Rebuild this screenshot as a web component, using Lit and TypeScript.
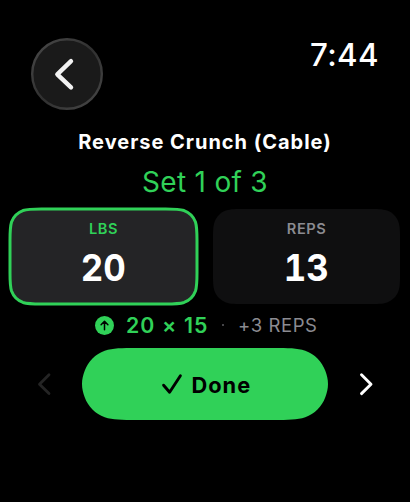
import { LitElement, html, css, svg } from "lit";
import { customElement, property } from "lit/decorators.js";

// Outline of a rectangle with continuous-curvature corners of radius r.
function smoothRect(x: number, y: number, w: number, h: number, r: number): string {
  const reach = Math.min(1.528665 * r, h / 2);
  const pill = reach < 1.3 * r;
  const end = reach / r;
  const c1 = pill ? 0.03 : 0;
  const k1 = pill ? 0.75 : 0.868407;
  const k2 = pill ? 0.87 : 1.088493;
  const X = (right: boolean, v: number) => (right ? x + w - v * r : x + v * r).toFixed(3);
  const Y = (low: boolean, v: number) => (low ? y + h - v * r : y + v * r).toFixed(3);
  const p = (R: boolean, B: boolean, a: number, b: number) => `${X(R, a)} ${Y(B, b)}`;
  const fromFlat = (R: boolean, B: boolean) =>
    `L${p(R, B, 1.528665, 0)}C${p(R, B, 1.088493, 0)} ${p(R, B, 0.868407, 0)} ${p(R, B, 0.631494, 0.074911)}` +
    `C${p(R, B, 0.372824, 0.169059)} ${p(R, B, 0.16906, 0.372824)} ${p(R, B, 0.074911, 0.631494)}` +
    `C${p(R, B, c1, k1)} ${p(R, B, 0, k2)} ${p(R, B, 0, end)}`;
  const fromSide = (R: boolean, B: boolean) =>
    `L${p(R, B, 0, end)}C${p(R, B, 0, k2)} ${p(R, B, c1, k1)} ${p(R, B, 0.074911, 0.631494)}` +
    `C${p(R, B, 0.16906, 0.372824)} ${p(R, B, 0.372824, 0.169059)} ${p(R, B, 0.631494, 0.074911)}` +
    `C${p(R, B, 0.868407, 0)} ${p(R, B, 1.088493, 0)} ${p(R, B, 1.528665, 0)}`;
  return (
    `M${p(false, false, 1.528665, 0)}` +
    fromFlat(true, false) + fromSide(true, true) + fromFlat(false, true) + fromSide(false, false) + "Z"
  );
}

@customElement("value-card")
class ValueCard extends LitElement {
  @property() label = "";
  @property() value = "";
  @property({ type: Boolean, reflect: true }) active = false;

  static styles = css`
    :host { display: flex; flex-direction: column; align-items: center; position: relative; height: 95px; }
    .plate { position: absolute; inset: 0; width: 100%; height: 100%; overflow: visible; }
    .fill { fill: #0f0f10; }
    .ring { fill: none; stroke: none; }
    .label { position: relative; margin-top: 10px; font-size: 14.6px; line-height: 20px; font-weight: 600; letter-spacing: 0.5px; color: #8b8b91; }
    .value { position: relative; margin-top: 6px; font-size: 37.5px; line-height: 46px; font-weight: 650; transform: scaleX(0.93); font-variant-numeric: tabular-nums; color: #fff; }
    :host([active]) .fill { fill: #242426; }
    :host([active]) .ring { stroke: #30d158; stroke-width: 3; }
    :host([active]) .label { color: #30d158; }
  `;

  render() {
    const d = smoothRect(0, 0, 187, 95, 20.5);
    return html`
      <svg class="plate" viewBox="0 0 187 95">${svg`<path class="fill" d=${d}></path><path class="ring" d=${d}></path>`}</svg>
      <span class="label">${this.label}</span>
      <span class="value">${this.value}</span>
    `;
  }
}

@customElement("app-root")
class AppRoot extends LitElement {
  static styles = css`
    :host { display: block; width: 410px; height: 502px; background: #000; color: #fff; overflow: hidden; font-family: Inter, "Liberation Sans", sans-serif; }
    .screen { display: flex; flex-direction: column; align-items: stretch; white-space: nowrap; }
    .top { display: flex; justify-content: space-between; align-items: flex-start; box-sizing: border-box; height: 129px; padding: 38px 31px 0 31px; }
    .back { display: block; width: 72px; height: 72px; }
    .time { margin-top: -1px; font-size: 31.3px; line-height: 36px; font-weight: 500; letter-spacing: 0.4px; }
    .title { height: 26px; line-height: 26px; text-align: center; font-size: 20px; font-weight: 670; letter-spacing: 0.98px; }
    .set { height: 36px; margin-top: 9px; line-height: 36px; text-align: center; font-size: 28px; color: #30d158; letter-spacing: 0.3px; }
    .cards { display: grid; grid-template-columns: 187px 187px; gap: 16px; padding: 0 10px; margin-top: 9px; }
    .hint { display: flex; align-items: center; height: 30px; margin-top: 6px; padding-left: 95px; }
    .up { width: 19px; height: 19px; margin-right: 12px; }
    .goal { width: 98px; font-size: 21.3px; font-weight: 640; letter-spacing: 1.1px; font-feature-settings: "calt" 0; color: #30d158; }
    .dot { width: 2px; height: 2px; border-radius: 1px; background: #5c5c61; margin: 0 14px 0 -2px; }
    .delta { font-size: 18.5px; letter-spacing: 0.6px; color: #8b8b91; }
    .actions { display: flex; align-items: center; height: 72px; margin-top: 8px; }
    .step { width: 82px; height: 72px; }
    .done { position: relative; display: flex; align-items: center; width: 246px; height: 72px; color: #000; }
    .pill { position: absolute; inset: 0; width: 246px; height: 72px; }
    .check { position: relative; width: 24px; height: 24px; margin-left: 78px; }
    .text { position: relative; margin: 2px 0 0 7.5px; font-size: 21.8px; font-weight: 650; letter-spacing: 1px; }
    .line { fill: none; stroke-linecap: round; stroke-linejoin: round; }
  `;

  render() {
    return html`
      <div class="screen">
        <div class="top">
          <svg class="back" viewBox="0 0 72 72">
            <defs>
              <linearGradient id="rim" x1="0" y1="0" x2="1" y2="1">
                <stop offset="0" stop-color="#4a4a4a"></stop>
                <stop offset=".5" stop-color="#303030"></stop>
                <stop offset="1" stop-color="#484848"></stop>
              </linearGradient>
            </defs>
            <circle cx="36" cy="36" r="34.8" fill="#1a1a1a" stroke="url(#rim)" stroke-width="2.4"></circle>
            <path class="line" d="M40 23.2 26.3 36.3 40 49.4" stroke="#f2f2f2" stroke-width="4.4"></path>
          </svg>
          <span class="time">7:44</span>
        </div>
        <div class="title">Reverse Crunch (Cable)</div>
        <div class="set">Set 1 of 3</div>
        <div class="cards">
          <value-card label="LBS" value="20" active></value-card>
          <value-card label="REPS" value="13"></value-card>
        </div>
        <div class="hint">
          <svg class="up" viewBox="0 0 19 19">
            <circle cx="9.5" cy="9.5" r="9.5" fill="#30d158"></circle>
            <path class="line" d="M9.5 13.7V5.4M6.1 8.7 9.5 5.2 12.9 8.7" stroke="#000" stroke-width="1.5"></path>
          </svg>
          <span class="goal">20 × 15</span>
          <span class="dot"></span>
          <span class="delta">+3 REPS</span>
        </div>
        <div class="actions">
          <svg class="step" viewBox="0 0 82 72"><path class="line" d="M49 26.8 39.5 36.2 49 45.6" stroke="#242424" stroke-width="2.8"></path></svg>
          <div class="done">
            <svg class="pill" viewBox="0 0 246 72"><path d=${smoothRect(0, 0, 246, 72, 36)} fill="#30d158"></path></svg>
            <svg class="check" viewBox="0 0 24 24"><path class="line" d="M3.6 13.2 9.6 20.2 20.4 3.8" stroke="#000" stroke-width="2.9"></path></svg>
            <span class="text">Done</span>
          </div>
          <svg class="step" viewBox="0 0 82 72"><path class="line" d="M33.5 26.8 43 36.2 33.5 45.6" stroke="#fff" stroke-width="2.9"></path></svg>
        </div>
      </div>
    `;
  }
}
